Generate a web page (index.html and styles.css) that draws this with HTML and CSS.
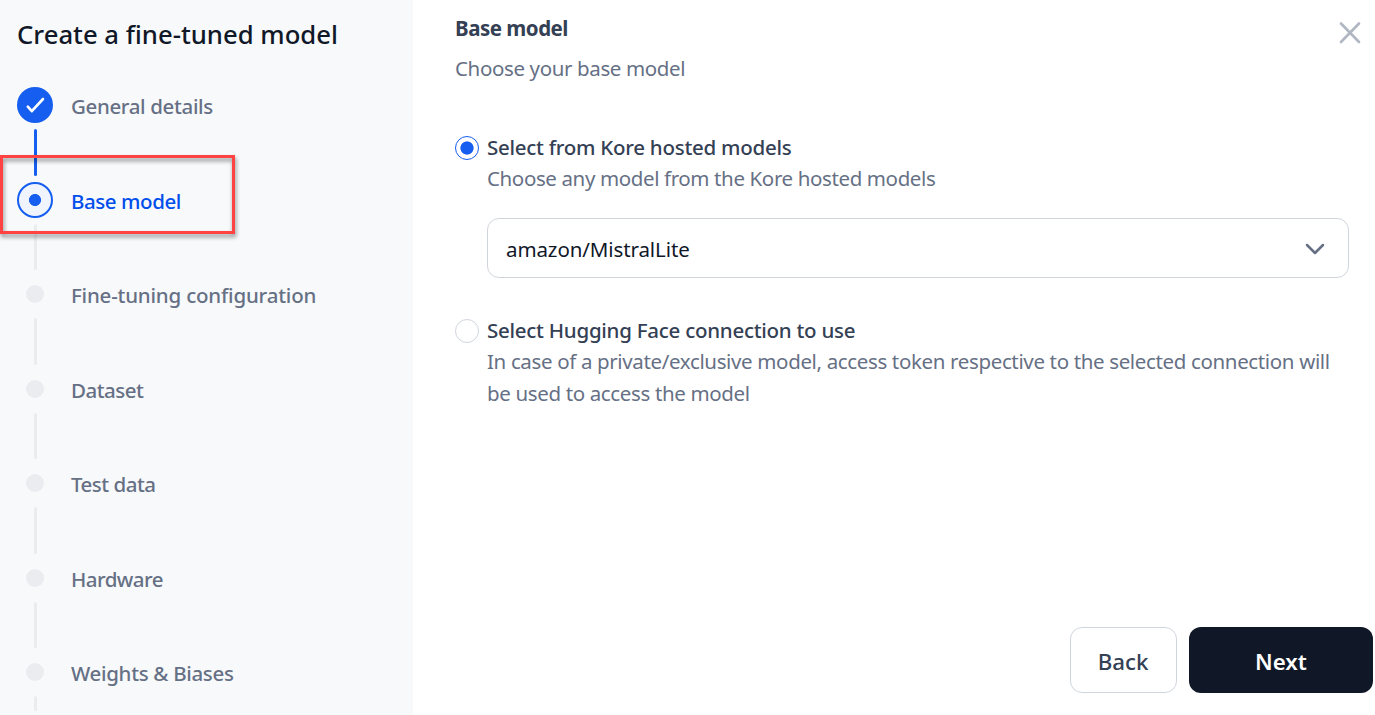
FILE: index.html
```html
<!DOCTYPE html>
<html lang="en">
<head>
<meta charset="utf-8">
<title>Create a fine-tuned model</title>
<link rel="stylesheet" href="styles.css">
</head>
<body>
<div class="wizard">
  <aside class="sidebar">
    <h1 class="title">Create a fine-tuned model</h1>
    <ol class="steps">
      <li class="step done">
        <div class="rail"><span class="marker"><svg width="36" height="36" viewBox="0 0 36 36" fill="none" stroke="#fff" stroke-width="2.6" stroke-linecap="round" stroke-linejoin="round"><path d="M10.800 19.700l4 4.500L26 12"/></svg></span><span class="line"></span></div>
        <span class="label">General details</span>
      </li>
      <li class="step active">
        <div class="rail"><span class="marker"></span><span class="line"></span></div>
        <span class="label l-base">Base model</span>
        <span class="highlight"></span>
      </li>
      <li class="step"><div class="rail"><span class="marker"></span><span class="line"></span></div><span class="label l-fine">Fine-tuning configuration</span></li>
      <li class="step"><div class="rail"><span class="marker"></span><span class="line"></span></div><span class="label l-dataset">Dataset</span></li>
      <li class="step"><div class="rail"><span class="marker"></span><span class="line"></span></div><span class="label l-test">Test data</span></li>
      <li class="step"><div class="rail"><span class="marker"></span><span class="line"></span></div><span class="label l-hardware">Hardware</span></li>
      <li class="step last"><div class="rail"><span class="marker"></span><span class="line"></span></div><span class="label l-weights">Weights &amp; Biases</span></li>
    </ol>
  </aside>
  <main class="content">
    <header class="head">
      <div>
        <h2 class="heading">Base model</h2>
        <p class="sub">Choose your base model</p>
      </div>
      <button class="close" aria-label="Close"><svg width="24" height="24" viewBox="0 0 24 24" fill="none" stroke="#b0b6c2" stroke-width="2.600" stroke-linecap="round"><path d="M3 3.500l18 18.500M21 3.500L3 22"/></svg></button>
    </header>
    <section class="option">
      <span class="radio checked"></span>
      <div class="option-body">
        <h3 class="option-title">Select from Kore hosted models</h3>
        <p class="desc">Choose any model from the Kore hosted models</p>
        <div class="select"><span class="value">amazon/MistralLite</span><svg width="22" height="14" viewBox="0 0 22 14" fill="none" stroke="#667085" stroke-width="2.500" stroke-linecap="round" stroke-linejoin="round"><path d="M3 4l8 8 8-8"/></svg></div>
      </div>
    </section>
    <section class="option">
      <span class="radio"></span>
      <div class="option-body">
        <h3 class="option-title">Select Hugging Face connection to use</h3>
        <p class="desc d-face">In case of a private/exclusive model, access token respective to the selected connection will<br>be used to access the model</p>
      </div>
    </section>
    <footer class="actions"><button class="btn back">Back</button><button class="btn next">Next</button></footer>
  </main>
</div>
</body>
</html>
```
FILE: styles.css
```css
* { box-sizing: border-box; }
body { margin: 0; background: #fff; font-family: "Noto Sans", "Open Sans", sans-serif; font-size: 20.5px; color: #667085; overflow: hidden; }
h1, h2, h3, p, ol { margin: 0; padding: 0; }
button { font-family: inherit; padding: 0; }
.wizard { display: flex; width: 1375px; height: 715px; overflow: hidden; }
.sidebar { width: 413px; flex: none; background: #f8f9fb; padding: 17px 17px 0; }
.title { font-size: 25.7px; line-height: 36px; font-weight: 500; color: #101828; white-space: nowrap; }
.steps { list-style: none; padding-top: 34px; }
.step { position: relative; display: flex; gap: 18px; height: 94.5px; }
.rail { width: 36px; display: flex; flex-direction: column; align-items: center; gap: 6px; }
.marker { width: 18px; height: 18px; margin: 9px 0; border-radius: 50%; background: #eaecf0; }
.line { width: 3px; height: 46.5px; border-radius: 2px; background: #eaecf0; }
.done .marker, .active .marker { width: 36px; height: 36px; margin: 0; }
.done .marker { background: #155eef; }
.done .line { background: #155eef; }
.marker svg { display: block; }
.active .marker { border: 2px solid #155eef; background: radial-gradient(circle, #155eef 5.6px, #eff4ff 6.4px); }
.label { line-height: 38px; font-weight: 500; letter-spacing: -.36px; white-space: nowrap; }
.l-base { letter-spacing: -.42px; }
.l-fine { letter-spacing: -.2px; }
.l-dataset, .l-test { letter-spacing: -.5px; }
.l-hardware { letter-spacing: -.55px; }
.l-weights { letter-spacing: -.32px; }
.active .label { color: #004eeb; }
.last .line { height: 15px; }
.highlight { position: absolute; left: -17px; top: -27px; width: 235px; height: 79px; border: 3px solid #ff4242; filter: drop-shadow(1px 3px 2px rgba(0, 0, 0, .45)); }
.content { flex: 1; display: flex; flex-direction: column; padding: 12px 2px 22px 42px; }
.head { display: flex; justify-content: space-between; height: 119px; }
.heading { font-size: 20.5px; line-height: 32px; font-weight: 700; letter-spacing: -.49px; color: #344054; }
.sub { line-height: 32px; margin-top: 8px; letter-spacing: -.37px; }
.close { width: 24px; height: 24px; margin: 8px 11px 0 0; border: 0; background: none; }
.close svg { display: block; }
.option { display: flex; gap: 8px; margin-bottom: 36px; }
.radio { width: 24px; height: 24px; margin-top: 5px; border: 1px solid #d0d5dd; border-radius: 50%; flex: none; }
.radio.checked { border-color: #155eef; background: radial-gradient(circle, #155eef 6.2px, #fff 7px); }
.option-title { padding-bottom: 1px; padding-top: 1px; font-size: 20.5px; line-height: 30px; font-weight: 500; letter-spacing: -.26px; color: #344054; }
.desc { line-height: 31.5px; letter-spacing: -.38px; white-space: nowrap; }
.d-face { letter-spacing: -.355px; }
.select { width: 862px; height: 60px; margin-top: 23.5px; padding: 0 22px 0 18px; display: flex; align-items: center; justify-content: space-between; border: 1px solid #d0d5dd; border-radius: 12px; color: #101828; }
.value { padding-top: 2px; letter-spacing: -.1px; }
.actions { margin-top: auto; display: flex; justify-content: flex-end; gap: 12px; }
.btn { height: 66px; padding-top: 2px; border-radius: 12px; font-size: 22.3px; font-weight: 500; }
.back { width: 107px; border: 1px solid #d0d5dd; background: #fff; color: #344054; padding-right: 1px; }
.next { width: 184px; border: 0; background: #101828; color: #fff; font-weight: 600; }
```
